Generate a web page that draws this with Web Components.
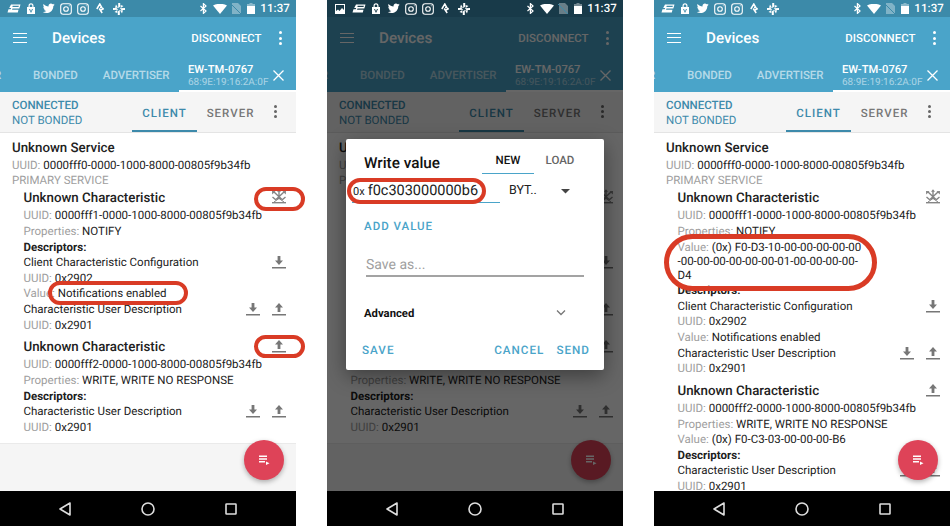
<!DOCTYPE html>
<html><head><meta charset="utf-8">
<style>
html,body{margin:0;padding:0;background:#fff}
body{width:950px;height:526px;overflow:hidden;font-family:Roboto,"Liberation Sans",sans-serif;text-rendering:geometricPrecision}
#page{display:flex;gap:31px;width:950px;height:526px}
</style></head>
<body>
<div id="page">
  <ph-phone>
    <ph-status></ph-status><ph-appbar></ph-appbar><ph-conn></ph-conn>
    <ph-list>
      <ph-service-head></ph-service-head>
      <ph-title>Unknown Characteristic<ph-icon slot="icons" name="notify"></ph-icon></ph-title>
      <ph-row label="UUID:">0000fff1-0000-1000-8000-00805f9b34fb</ph-row>
      <ph-row label="Properties:">NOTIFY</ph-row>
      <ph-row bold>Descriptors:</ph-row>
      <ph-row>Client Characteristic Configuration<ph-icon slot="icons" name="down"></ph-icon></ph-row>
      <ph-row label="UUID:">0x2902</ph-row>
      <ph-row label="Value:">Notifications enabled</ph-row>
      <ph-row>Characteristic User Description<ph-icon slot="icons" name="down"></ph-icon><ph-icon slot="icons" name="up"></ph-icon></ph-row>
      <ph-row label="UUID:">0x2901</ph-row>
      <ph-title second>Unknown Characteristic<ph-icon slot="icons" name="up"></ph-icon></ph-title>
      <ph-row label="UUID:">0000fff2-0000-1000-8000-00805f9b34fb</ph-row>
      <ph-row label="Properties:">WRITE, WRITE NO RESPONSE</ph-row>
      <ph-row bold>Descriptors:</ph-row>
      <ph-row>Characteristic User Description<ph-icon slot="icons" name="down"></ph-icon><ph-icon slot="icons" name="up"></ph-icon></ph-row>
      <ph-row label="UUID:">0x2901</ph-row>
    </ph-list>
    <ph-nav></ph-nav>
    <ph-fab></ph-fab>
    <ph-oval style="left:254px;top:187px;width:51px;height:24px"></ph-oval>
    <ph-oval style="left:48px;top:281px;width:140px;height:24px"></ph-oval>
    <ph-oval style="left:254px;top:335px;width:51px;height:23px"></ph-oval>
  </ph-phone>

  <ph-phone>
    <ph-status extra dim></ph-status><ph-appbar></ph-appbar><ph-conn></ph-conn>
    <ph-list>
      <ph-service-head></ph-service-head>
      <ph-title>Unknown Characteristic<ph-icon slot="icons" name="notify"></ph-icon></ph-title>
      <ph-row label="UUID:">0000fff1-0000-1000-8000-00805f9b34fb</ph-row>
      <ph-row label="Properties:">NOTIFY</ph-row>
      <ph-row bold>Descriptors:</ph-row>
      <ph-row>Client Characteristic Configuration<ph-icon slot="icons" name="down"></ph-icon></ph-row>
      <ph-row label="UUID:">0x2902</ph-row>
      <ph-row label="Value:">Notifications enabled</ph-row>
      <ph-row>Characteristic User Description<ph-icon slot="icons" name="down"></ph-icon><ph-icon slot="icons" name="up"></ph-icon></ph-row>
      <ph-row label="UUID:">0x2901</ph-row>
      <ph-title second>Unknown Characteristic<ph-icon slot="icons" name="up"></ph-icon></ph-title>
      <ph-row label="UUID:">0000fff2-0000-1000-8000-00805f9b34fb</ph-row>
      <ph-row label="Properties:">WRITE, WRITE NO RESPONSE</ph-row>
      <ph-row bold>Descriptors:</ph-row>
      <ph-row>Characteristic User Description<ph-icon slot="icons" name="down"></ph-icon><ph-icon slot="icons" name="up"></ph-icon></ph-row>
      <ph-row label="UUID:">0x2901</ph-row>
    </ph-list>
    <ph-nav></ph-nav>
    <ph-fab></ph-fab>
    <ph-scrim></ph-scrim>
    <ph-dialog></ph-dialog>
    <ph-oval style="left:20px;top:178px;width:139px;height:26px" fill></ph-oval>
    <ph-input-text></ph-input-text>
  </ph-phone>

  <ph-phone>
    <ph-status></ph-status><ph-appbar></ph-appbar><ph-conn></ph-conn>
    <ph-list>
      <ph-service-head></ph-service-head>
      <ph-title>Unknown Characteristic<ph-icon slot="icons" name="notify"></ph-icon></ph-title>
      <ph-row label="UUID:">0000fff1-0000-1000-8000-00805f9b34fb</ph-row>
      <ph-row label="Properties:">NOTIFY</ph-row>
      <ph-row label="Value:">(0x) F0-D3-10-00-00-00-00-00<br>-00-00-00-00-00-00-01-00-00-00-00-<br>D4</ph-row>
      <ph-row bold>Descriptors:</ph-row>
      <ph-row>Client Characteristic Configuration<ph-icon slot="icons" name="down"></ph-icon></ph-row>
      <ph-row label="UUID:">0x2902</ph-row>
      <ph-row label="Value:">Notifications enabled</ph-row>
      <ph-row>Characteristic User Description<ph-icon slot="icons" name="down"></ph-icon><ph-icon slot="icons" name="up"></ph-icon></ph-row>
      <ph-row label="UUID:">0x2901</ph-row>
      <ph-title second>Unknown Characteristic<ph-icon slot="icons" name="up"></ph-icon></ph-title>
      <ph-row label="UUID:">0000fff2-0000-1000-8000-00805f9b34fb</ph-row>
      <ph-row label="Properties:">WRITE, WRITE NO RESPONSE</ph-row>
      <ph-row label="Value:">(0x) F0-C3-03-00-00-00-B6</ph-row>
      <ph-row bold>Descriptors:</ph-row>
      <ph-row>Characteristic User Description<ph-icon slot="icons" name="down"></ph-icon><ph-icon slot="icons" name="up"></ph-icon></ph-row>
      <ph-row label="UUID:">0x2901</ph-row>
    </ph-list>
    <ph-nav></ph-nav>
    <ph-fab></ph-fab>
    <ph-oval style="left:10px;top:234px;width:213px;height:57px;border-width:5px"></ph-oval>
  </ph-phone>
</div>
<script>
const ICONS={
 down:'<svg width="26" height="20" viewBox="0 0 26 20"><path d="M11.6 3h2.8v4.5h2.6L13 12 9 7.500h2.600z" fill="#777"/><rect x="6" y="14" width="14" height="1.500" fill="#777"/></svg>',
 up:'<svg width="26" height="20" viewBox="0 0 26 20"><path d="M11.6 12h2.800V7.500h2.600L13 3 9 7.500h2.600z" fill="#777"/><rect x="6" y="14" width="14" height="1.500" fill="#777"/></svg>',
 notify:'<svg width="26" height="20" viewBox="0 0 26 20" fill="none" stroke="#858585"><path d="M7.500 3.500l8.500 8M18.500 3.500l-8.500 8M13 3v8M6.500 9l3.500 3M19.500 9l-3.500 3" stroke-width="1.400"/><path d="M6 3l3.500.2L6.200 6.500zM20 3l-3.500.2 3.300 3.300zM13 1.200l2 2.600h-4z" fill="#858585" stroke="none"/><path d="M8 14l5-3.500 5 3.500" stroke-width="1"/><rect x="6" y="14" width="14" height="1.400" fill="#858585" stroke="none"/></svg>'
};
function def(name,html,extra){
  customElements.define(name,class extends HTMLElement{
    constructor(){super();const r=this.attachShadow({mode:'open'});r.innerHTML=typeof html==='function'?html(this):html;}
    connectedCallback(){if(extra)extra(this)}
  });
}
def('ph-phone',`<style>:host{display:flex;flex-direction:column;position:relative;width:296px;height:526px;flex:none;background:#f5f5f5;color:#212121;font-family:Roboto,"Liberation Sans",sans-serif}</style><slot></slot>`);
def('ph-icon',`<style>:host{display:block;width:26px;height:20px;flex:none;margin-top:-2px}svg{display:block}</style><span id="i"></span>`,el=>{el.shadowRoot.getElementById('i').innerHTML=ICONS[el.getAttribute('name')]});
def('ph-status',`<style>
:host{display:flex;align-items:center;height:17px;background:var(--b,#3c8aa9);padding:0 6px 0 7px;color:#fff;flex:none;box-sizing:border-box}
:host([dim]){--b:#183a49}
.l{display:flex;align-items:center;gap:6px;flex:1}
.r{display:flex;align-items:center}
.t{font:500 11.500px/17px Roboto,sans-serif;margin-left:5px;letter-spacing:.1px}
svg{display:block;flex:none}
#img{display:none}
:host([extra]) #img{display:block}
</style>
<div class="l">
<svg id="img" width="12" height="12" viewBox="0 0 12 12"><path fill="#fff" d="M1 1h10v10H1z"/><path fill="#183a49" d="M2 2h8v5L8 5 5.500 8 4 6.500 2 8z"/></svg>
<svg width="14" height="10" viewBox="0 0 14 10"><path fill="#fff" d="M4 .6h9.500l-1.200 3.800H5.500L5 5.800h6.500L10.800 8.500H.5l1-3.200h2.200l.5-1.400H2.200zM5.700 1.800l-.3 1.300h6.100l.4-1.300z" fill-rule="evenodd"/></svg>
<svg width="10" height="11" viewBox="0 0 10 11" style="margin-left:-1px"><path fill="#fff" fill-rule="evenodd" d="M2.500 4V2.800a2.500 2.500 0 0 1 5 0V4H9v7H1V4zM3.700 4h2.600V2.800a1.300 1.300 0 0 0-2.600 0zM3 6l2 4 2-4H6L5 8.200 4 6z"/></svg>
<svg width="13" height="11" viewBox="0 0 24 21"><path fill="#fff" d="M23.500 3c-.8.400-1.700.6-2.600.8.900-.6 1.600-1.400 2-2.500-.9.500-1.900.9-2.900 1.100-.9-.9-2.100-1.400-3.400-1.400-2.500 0-4.600 2.100-4.600 4.600 0 .4 0 .7.100 1C8.300 6.400 4.900 4.600 2.600 1.800c-.4.700-.6 1.500-.6 2.300 0 1.600.8 3 2 3.800-.8 0-1.500-.2-2.100-.5v.1c0 2.200 1.600 4.100 3.700 4.500-.7.200-1.400.2-2.100.1.600 1.800 2.300 3.100 4.300 3.200-1.600 1.200-3.600 2-5.700 2-.4 0-.7 0-1.100-.1 2 1.300 4.500 2.100 7.100 2.100 8.500 0 13.100-7 13.100-13.100v-.6c.9-.6 1.700-1.400 2.300-2.300z"/></svg>
<svg width="12" height="12" viewBox="0 0 12 12" fill="none" stroke="#fff" style="margin-left:-1px"><rect x=".7" y=".7" width="10.600" height="10.600" rx="2.500" stroke-width="1.100"/><circle cx="6" cy="6" r="2.300" stroke-width="1.100"/><circle cx="9.200" cy="2.800" r=".5" fill="#fff" stroke="none"/></svg>
<svg width="12" height="12" viewBox="0 0 12 12" fill="none" stroke="#fff" style="margin-left:-1px"><rect x=".7" y=".7" width="10.600" height="10.600" rx="2.500" stroke-width="1.100"/><circle cx="6" cy="6" r="2.300" stroke-width="1.100"/><circle cx="9.200" cy="2.800" r=".5" fill="#fff" stroke="none"/></svg>
<svg width="9" height="11" viewBox="0 0 9 11" style="margin-left:1px"><path fill="none" stroke="#fff" stroke-width="1.500" d="M.8 6L3.800 1l2 3.500L4 4.500M3.200 5.500L6.200 10M5 7L7.800 5.500"/></svg>
<svg width="12" height="12" viewBox="0 0 12 12" style="margin-left:2px"><path fill="#fff" d="M5.200 0h2v3.500L5.200 5.300zM12 5v2H8.500L6.700 5.200zM6.800 12h-2V8.500l2-1.800zM0 7V5h3.500l1.800 1.800zM3 1.500l2 3.300-3 0zM10.500 3l-2.800 2 0-3zM9 10.500L7 7.200l3 0zM1.500 9l2.800-2 0 3z"/></svg>
</div>
<div class="r">
<svg width="7" height="11" viewBox="0 0 7 11" fill="none" stroke="#fff" stroke-width="1.200"><path d="M.5 3l5.500 5-2.600 2.400V.6L6 3 .5 8"/></svg>
<svg width="14" height="10" viewBox="0 0 14 10" style="margin-left:6px"><path fill="#fff" d="M0 1.500Q7-2 14 1.500L7 10z"/></svg>
<svg width="11" height="11" viewBox="0 0 11 11" style="margin-left:4px"><path fill="rgba(255,255,255,.35)" d="M1 0h6l3 3v8H1z"/><path stroke="#3c8aa9" d="M0 1l10 10"/></svg>
<svg width="8" height="11" viewBox="0 0 8 11" style="margin-left:5px"><path fill="rgba(255,255,255,.4)" d="M2.500 0h3v1H8v2H0V1h2.500z"/><path fill="#fff" d="M0 3h8v8H0z"/></svg>
<span class="t">11:37</span>
</div>`);
def('ph-appbar',`<style>
:host{display:block;background:#4aa4c9;color:#fff;flex:none;height:75px;overflow:hidden}
.top{display:flex;align-items:center;height:42px;padding-left:13px}
.menu{width:14px;height:10px;border-top:1.500px solid #fff;border-bottom:1.500px solid #fff;box-sizing:border-box;flex:none}
.menu i{display:block;height:1.500px;background:#fff;margin-top:2.750px}
.title{font:500 15.200px/42px Roboto,sans-serif;margin-left:25px;flex:1}
.act{font:500 11.400px/42px Roboto,sans-serif;letter-spacing:.05px}
.dots{display:flex;flex-direction:column;gap:2.200px;width:3px;margin:0 14.500px 0 17px}
.dots i{width:3px;height:3px;border-radius:50%;background:#fff}
.tabs{display:flex;align-items:stretch;height:33px;font:500 11.500px/33px Roboto,sans-serif;color:rgba(255,255,255,.6)}
.tab{flex:none;white-space:nowrap}
.cur{margin-left:auto;width:117px;box-sizing:border-box;border-bottom:2.500px solid #fff;display:flex;padding-left:9px;color:#fff;line-height:13px;font-size:11.200px}
.cur .n{padding-top:4px;flex:1}
.cur small{display:block;font:400 10px/13px Roboto,sans-serif;color:rgba(255,255,255,.55)}
.cur svg{margin:11px 12px 0 0}
</style>
<div class="top"><div class="menu"><i></i></div><div class="title">Devices</div><div class="act">DISCONNECT</div><div class="dots"><i></i><i></i><i></i></div></div>
<div class="tabs"><div class="tab" style="margin-left:-6px;width:8px">R</div><div class="tab" style="margin-left:31px">BONDED</div><div class="tab" style="margin-left:25px">ADVERTISER</div><div class="tab cur"><div class="n">EW-TM-0767<small>68:9E:19:16:2A:0F</small></div><svg width="11" height="11" viewBox="0 0 11 11" stroke="#fff" stroke-width="1.300"><path d="M.5.500l10 10M10.500.500l-10 10"/></svg></div></div>`);
def('ph-conn',`<style>
:host{display:flex;align-items:stretch;height:41px;background:#f5f5f5;flex:none;box-sizing:border-box;border-bottom:1px solid #e4e4e4;font-family:Roboto,sans-serif}
.s{flex:1;padding:6px 0 0 12px;font:500 11.500px/15px Roboto,sans-serif;color:#3d8aab}
.s div+div{font-weight:400}
.t{font:500 11.500px/42px Roboto,sans-serif;letter-spacing:1px;width:65px;text-align:center;box-sizing:border-box;color:#777}
.on{color:#3d8aab;border-bottom:2px solid #3d8aab;}
.dots{display:flex;flex-direction:column;justify-content:center;gap:2px;width:3px;margin:0 19px 0 11px;padding-bottom:2px}
.dots i{width:3px;height:3px;border-radius:50%;background:#666}
</style>
<div class="s"><div>CONNECTED</div><div>NOT BONDED</div></div>
<div class="t on">CLIENT</div><div class="t" style="margin-left:1px">SERVER</div><div class="dots"><i></i><i></i><i></i></div>`);
def('ph-list',`<style>
:host{display:block;flex:1;min-height:0;overflow:hidden}
.w{background:#fff;padding:6.500px 0 8px;border-bottom:1px solid #eaeaea}
</style><div class="w"><slot></slot></div>`);
def('ph-service-head',`<style>
:host{display:block;padding:0 0 0 12px;color:#212121}
.t{font:500 13.300px/18px Roboto,sans-serif;margin-bottom:.2px}
.r{font:400 11.500px/14px Roboto,sans-serif;margin-bottom:1.700px;white-space:nowrap}
.k{color:#9e9e9e}
</style><div class="t">Unknown Service</div><div class="r"><span class="k">UUID:</span> 0000fff0-0000-1000-8000-00805f9b34fb</div><div class="r k">PRIMARY SERVICE</div>`);
def('ph-title',`<style>
:host{display:flex;padding:0 4px 0 23.500px;margin-top:3px;font:500 13.300px/18px Roboto,sans-serif;color:#212121}
:host([second]){margin-top:7.800px}
.m{flex:1}
.i{display:flex;height:18px;overflow:visible}
</style><div class="m"><slot></slot></div><div class="i"><slot name="icons"></slot></div>`);
def('ph-row',el=>{
  const l=el.getAttribute('label');
  return `<style>
:host{display:flex;padding:0 4px 0 23.500px;margin-bottom:1.600px;font:400 11.500px/14px Roboto,sans-serif;color:#212121}
:host([bold]){font-weight:700}
.m{flex:1;white-space:nowrap}
.k{color:#9e9e9e}
.i{display:flex;height:14px;overflow:visible}
</style><div class="m">${l?`<span class="k">${l}</span> `:''}<slot></slot></div><div class="i"><slot name="icons"></slot></div>`});
def('ph-nav',`<style>
:host{display:flex;justify-content:center;align-items:center;height:35px;background:#000;flex:none;gap:63px}
svg{display:block}
</style>
<svg width="20" height="20" viewBox="0 0 20 20" fill="none" stroke="#ddd" stroke-width="1.600"><path d="M15 4v12L5 10z" stroke-linejoin="round"/></svg>
<svg width="20" height="20" viewBox="0 0 20 20" fill="none" stroke="#ddd" stroke-width="1.600"><circle cx="10" cy="10" r="6"/></svg>
<svg width="20" height="20" viewBox="0 0 20 20" fill="none" stroke="#ddd" stroke-width="1.600"><rect x="5" y="5" width="10" height="10" rx=".5"/></svg>`);
def('ph-fab',`<style>
:host{position:absolute;left:244px;top:440px;width:40px;height:40px;border-radius:50%;background:#de4358;box-shadow:0 2px 5px rgba(0,0,0,.3);display:flex;align-items:center;justify-content:center}
</style><svg width="12" height="12" viewBox="0 0 12 12" fill="#fff"><path d="M1 1.500h8V3H1zM1 4.300h8v1.400H1zM1 7h6v1.400H1zM8 7.500v3.500l3.500-1.700z"/></svg>`);
def('ph-scrim',`<style>:host{position:absolute;left:0;right:0;top:17px;bottom:35px;background:rgba(0,0,0,.6)}</style>`);
def('ph-oval',`<style>:host{position:absolute;box-sizing:border-box;border:4px solid #d93b25;border-radius:999px;pointer-events:none}:host([fill]){background:#fff}</style>`);
def('ph-input-text',`<style>:host{position:absolute;left:26px;top:182px;display:flex;align-items:baseline;gap:3px;color:#212121;line-height:18px;font-family:Roboto,sans-serif;white-space:nowrap}.a{font-size:11px}.b{font-size:14.500px}</style><span class="a">0x</span><span class="b">f0c303000000b6</span>`);
def('ph-dialog',`<style>
:host{position:absolute;left:19px;top:139px;width:258px;height:231px;box-sizing:border-box;background:#fff;border-radius:2px;box-shadow:0 6px 20px rgba(0,0,0,.4);display:flex;flex-direction:column;color:#212121;font-family:Roboto,sans-serif}
.h{display:flex;height:35px;padding-left:18px;flex:none}
.ti{font:500 15.300px/49px Roboto,sans-serif;flex:1;color:#111}
.tb{width:52px;text-align:center;font:500 11.500px/43px Roboto,sans-serif;color:#666;box-sizing:border-box;height:35px}
.tb.on{color:#111;border-bottom:1.500px solid #4aa4c9}
.tb:last-child{margin-right:18px}
.inp{display:flex;height:30px;margin-left:6px;flex:none}
.line{width:148px;box-sizing:border-box;border-bottom:1.500px solid #4aa4c9;height:29px}
.sel{font:400 12.500px/34px Roboto,sans-serif;margin-left:9px;flex:1;display:flex}
.sel svg{margin:15px 0 0 24px}
.add{font:500 11.500px/14px Roboto,sans-serif;letter-spacing:1px;color:#4aa4c9;padding:15px 0 0 18px;flex:none}
.sv{margin:18px 20px 0 20px;height:26px;box-sizing:border-box;border-bottom:2px solid #a3a3a3;font:400 14px/29px Roboto,sans-serif;color:#a0a0a0;flex:none}
.ad{display:flex;justify-content:space-between;padding:27px 37px 0 18px;font:700 11.300px/20px Roboto,sans-serif;color:#111;flex:none}
.ad svg{margin-top:5px}
.ft{display:flex;font:500 11.700px/14px Roboto,sans-serif;letter-spacing:1px;color:#4aa4c9;padding:19px 14px 0 16px;flex:none}
.ft span:first-child{flex:1}
.ft span+span{margin-left:12px}
</style>
<div class="h"><div class="ti">Write value</div><div class="tb on">NEW</div><div class="tb">LOAD</div></div>
<div class="inp"><div class="line"></div><div class="sel">BYT..<svg width="9" height="5" viewBox="0 0 9 5"><path fill="#444" d="M0 0h9L4.500 4.500z"/></svg></div></div>
<div class="add">ADD VALUE</div>
<div class="sv">Save as...</div>
<div class="ad"><span>Advanced</span><svg width="12" height="8" viewBox="0 0 12 8" fill="none" stroke="#777" stroke-width="1.300"><path d="M2 1.500l4 4 4-4"/></svg></div>
<div class="ft"><span>SAVE</span><span>CANCEL</span><span>SEND</span></div>`);
</script>
</body></html>
